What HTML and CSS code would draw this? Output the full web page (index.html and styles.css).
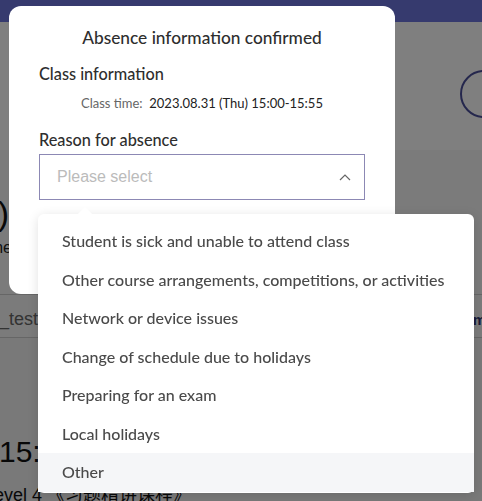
FILE: index.html
```html
<!DOCTYPE html>
<html lang="en">
<head>
  <meta charset="UTF-8" />
  <meta name="viewport" content="width=device-width, initial-scale=1.0"/>
  <title>Absence information</title>
  <link rel="stylesheet" href="styles.css">
</head>
<body>
  <div class="page">
    <div class="topbar"></div>
    <div class="hero">
      <span class="round-btn"></span>
    </div>
    <div class="lesson">
      <div class="lesson-title">(Thu)</div>
      <div class="lesson-sub">Time</div>
    </div>
    <div class="account">
      <span class="account-name">student_test</span>
      <span class="account-link">m</span>
    </div>
    <div class="next">
      <div class="next-time">15:00</div>
      <div class="next-sub">Level 4 《习题精讲课程》</div>
    </div>
  </div>

  <div class="overlay">
    <div class="modal">
      <h1>Absence information confirmed</h1>
      <h2>Class information</h2>
      <p class="class-time"><span class="muted">Class time:</span>&nbsp; 2023.08.31 (Thu) 15:00-15:55</p>
      <h2>Reason for absence</h2>
      <div class="select">
        <span class="placeholder">Please select</span>
        <svg class="chevron" width="12" height="7" viewBox="0 0 12 7">
          <path d="M1 6 L6 1 L11 6" fill="none" stroke="#666" stroke-width="1.2"/>
        </svg>
        <ul class="dropdown">
          <li>Student is sick and unable to attend class</li>
          <li>Other course arrangements, competitions, or activities</li>
          <li>Network or device issues</li>
          <li>Change of schedule due to holidays</li>
          <li>Preparing for an exam</li>
          <li>Local holidays</li>
          <li class="hover">Other</li>
        </ul>
      </div>
    </div>
  </div>
</body>
</html>
```

FILE: styles.css
```css
:root {
  --navy: #6c74dc;
  --text: #333;
  --item: #4a4a4a;
  --border: #8c88b4;
}

body {
  margin: 0;
  font-family: Lato, "Noto Sans", sans-serif;
  color: var(--text);
  background: #fdfdfd;
  overflow: hidden;
  height: 501px;
}

/* page under the dialog */
.page {
  height: 501px;
  overflow: hidden;
}

.topbar {
  height: 22px;
  background: var(--navy);
}

.hero {
  height: 128px;
  background: #fefefe;
  display: flex;
  align-items: center;
  justify-content: flex-end;
}

.round-btn {
  width: 44px;
  height: 44px;
  border: 2px solid #4a4f9a;
  border-radius: 50%;
  margin-right: -26px;
  margin-top: 16px;
}

.lesson {
  height: 144px;
  background: #f6f6f6;
  padding-top: 46px;
  box-sizing: border-box;
  font-family: "Liberation Sans", Arial, sans-serif;
}

/* text ends near the left edge, the rest spills off-screen */
.lesson-title,
.lesson-sub {
  display: flex;
  justify-content: flex-end;
  white-space: nowrap;
}

.lesson-title {
  width: 9px;
  font-size: 34px;
  color: #111;
  line-height: 34px;
}

.lesson-sub {
  width: 12px;
  font-size: 16px;
  margin-top: 9px;
  color: #222;
}

.account {
  height: 44px;
  box-sizing: border-box;
  display: flex;
  align-items: center;
  justify-content: space-between;
  padding-top: 6px;
  border-top: 1px solid #ccc;
  border-bottom: 1px solid #ccc;
  background: #f6f6f6;
  font-family: "Liberation Sans", Arial, sans-serif;
}

.account-name {
  font-size: 18px;
  color: #666;
  margin-left: -60px;
}

.account-link {
  font-size: 15px;
  font-weight: 700;
  color: #30356e;
  margin-right: -4px;
}

.next {
  padding-top: 96px;
  background: #f2f2f2;
  height: 200px;
  font-family: "Liberation Sans", Arial, sans-serif;
}

.next-time {
  font-size: 30px;
  line-height: 36px;
  color: #111;
  margin-left: -1px;
}

.next-sub {
  font-size: 18px;
  margin-top: 10px;
  margin-left: -16px;
  color: #111;
  font-family: "Liberation Sans", "Noto Sans CJK SC", sans-serif;
}

/* dialog */
.overlay {
  position: fixed;
  inset: 0;
  background: rgba(0, 0, 0, 0.5);
}

.modal {
  position: absolute;
  left: 9px;
  top: 6px;
  width: 386px;
  height: 288px;
  background: white;
  border-radius: 12px;
  padding: 0 30px;
  box-sizing: border-box;
}

h1 {
  margin: 22px 0 0;
  font-size: 17.3px;
  font-weight: 500;
  text-align: center;
  line-height: 20px;
  color: #2e2e2e;
}

h2 {
  margin: 0;
  font-size: 16.3px;
  font-weight: 500;
  line-height: 20px;
  color: #2e2e2e;
}

h1 + h2 {
  margin-top: 16px;
}

.class-time {
  margin: 11px 0 19px 42px;
  font-size: 13px;
  line-height: 16px;
  color: #222;
}

.muted {
  color: #666;
}

.select {
  position: relative;
  margin-top: 4px;
  height: 44px;
  border: 1px solid var(--border);
  display: flex;
  align-items: center;
  justify-content: space-between;
  padding: 0 13px 0 17px;
}

.placeholder {
  font-family: "Liberation Sans", Arial, sans-serif;
  font-size: 16px;
  color: #bbb;
}

.dropdown {
  position: absolute;
  left: -2px;
  top: 59px;
  width: 436px;
  margin: 0;
  padding: 8px 0 1px;
  list-style: none;
  background: white;
  border-radius: 6px;
  box-shadow: 0 2px 12px rgba(0, 0, 0, 0.12);
}

.dropdown::before {
  content: "";
  position: absolute;
  top: -5px;
  left: 42px;
  width: 10px;
  height: 10px;
  background: white;
  transform: rotate(45deg);
}

.dropdown li {
  height: 38.5px;
  line-height: 38.5px;
  padding-left: 24px;
  font-size: 16px;
  font-weight: 500;
  color: var(--item);
  white-space: nowrap;
}

.dropdown li.hover {
  background: #f5f6f8;
}
```
